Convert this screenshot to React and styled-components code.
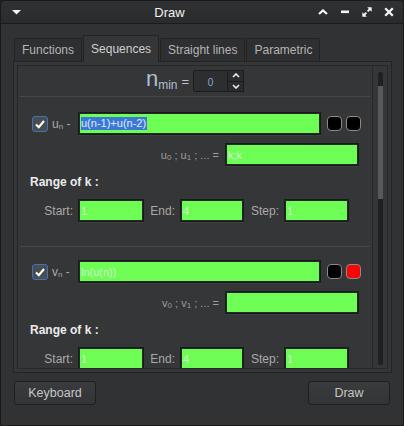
import React from 'react'
import styled, { createGlobalStyle } from 'styled-components'

const GlobalStyle = createGlobalStyle`
  html, body {
    margin: 0;
    padding: 0;
    background: #1f1f20;
  }
  body {
    font-family: "Liberation Sans", Arial, sans-serif;
  }
  * {
    box-sizing: border-box;
  }
`

const Window = styled.div`
  width: 404px;
  height: 426px;
  background: #313234;
  border: 1px solid #1a1a1b;
  border-radius: 5px 5px 2px 2px;
  display: flex;
  flex-direction: column;
  overflow: hidden;
`

const TitleBar = styled.div`
  height: 23px;
  flex: none;
  display: flex;
  align-items: center;
  background: linear-gradient(#303133, #2a2b2d);
  border-bottom: 1px solid #1b1b1c;
`

const TitleLeft = styled.div`
  width: 30px;
  display: flex;
  align-items: center;
  padding-left: 11px;
`

const Title = styled.div`
  flex: 1;
  text-align: center;
  color: #f2f2f2;
  font-size: 13px;
`

const TitleRight = styled.div`
  width: 95px;
  display: flex;
  align-items: center;
  padding: 0 3px 0 4px;
`

const TitleBtn = styled.div`
  width: 22px;
  height: 22px;
  display: flex;
  align-items: center;
  justify-content: center;
`

const Body = styled.div`
  flex: 1;
  display: flex;
  flex-direction: column;
  padding: 11px 11px 0 12px;
`

const TabBar = styled.div`
  height: 26px;
  display: flex;
  align-items: flex-end;
  padding-left: 1px;
  gap: 1px;
`

const Tab = styled.div`
  position: relative;
  height: ${p => (p.$active ? '27px' : '23px')};
  margin-bottom: ${p => (p.$active ? '-1px' : '0')};
  z-index: ${p => (p.$active ? 1 : 0)};
  padding: 0 7px;
  display: flex;
  align-items: center;
  font-size: 12px;
  color: ${p => (p.$active ? '#cfcfcf' : '#b4b4b4')};
  background: ${p => (p.$active ? '#353638' : '#2e2f31')};
  border: 1px solid #232325;
  border-bottom: ${p => (p.$active ? '1px solid #353638' : 'none')};
  border-radius: 2px 2px 0 0;
`

const Panel = styled.div`
  height: 312px;
  background: #353638;
  border: 1px solid #232325;
  padding: 3px;
  display: flex;
`

const Frame = styled.div`
  flex: 1;
  display: flex;
  border: 1px solid #27282a;
  min-height: 0;
`

const Content = styled.div`
  flex: 1;
  overflow: hidden;
  display: flex;
  flex-direction: column;
`

const ScrollBar = styled.div`
  width: 15px;
  border-left: 1px solid #27282a;
  display: flex;
  justify-content: center;
  padding: 6px 0 3px;
`

const Groove = styled.div`
  width: 5px;
  display: flex;
  flex-direction: column;
  background: #1f2022;
  border-radius: 3px;
  overflow: hidden;
`

const Thumb = styled.div`
  margin-top: 14px;
  height: 113px;
  background: #58595b;
`

const NminRow = styled.div`
  height: 30px;
  flex: none;
  display: flex;
  align-items: center;
  justify-content: center;
`

const BigN = styled.span`
  font-size: 22px;
  line-height: 22px;
  color: #aebfd0;
  margin-top: -4px;
`

const MinSub = styled.span`
  font-size: 12px;
  color: #aebfd0;
  margin-top: 8px;
`

const Equals = styled.span`
  font-size: 13px;
  color: #c4c4c4;
  margin: 0 4px 0 4px;
`

const SpinBox = styled.div`
  display: flex;
  height: 22px;
`

const SpinText = styled.div`
  width: 35px;
  background: #2d2e30;
  border: 1px solid #1c1c1d;
  border-radius: 2px 0 0 2px;
  display: flex;
  align-items: center;
  justify-content: center;
  font-size: 10px;
  color: #8aa6d6;
  padding-top: 2px;
`

const SpinArrows = styled.div`
  width: 16px;
  display: flex;
  flex-direction: column;
  background: #2b2c2e;
  border: 1px solid #1c1c1d;
  border-left: none;
`

const SpinArrow = styled.div`
  flex: 1;
  display: flex;
  align-items: center;
  justify-content: center;
  border-top: ${p => (p.$lower ? '1px solid #1c1c1d' : 'none')};
`

const Separator = styled.div`
  height: 1px;
  flex: none;
  background: #47484a;
  margin: 0 2px;
`

const Section = styled.div`
  flex: none;
  padding: ${p => p.$top}px 0 24px;
  display: flex;
  flex-direction: column;
`

const SeqRow = styled.div`
  height: 23px;
  display: flex;
  align-items: center;
  padding: 0 11px 0 14px;
`

const CheckBox = styled.div`
  width: 16px;
  height: 16px;
  flex: none;
  border: 1px solid #3f73b8;
  border-radius: 3px;
  background: #4b4c4e;
  display: flex;
  align-items: center;
  justify-content: center;
`

const SeqLabel = styled.div`
  width: 26px;
  margin-left: 4px;
  font-size: 12px;
  color: #a9a9a9;
  white-space: nowrap;
`

const Sub = styled.sub`
  font-size: 8px;
  vertical-align: baseline;
  position: relative;
  top: 1px;
`

const Field = styled.div`
  flex: ${p => (p.$width ? 'none' : '1')};
  width: ${p => (p.$width ? `${p.$width}px` : 'auto')};
  height: 23px;
  border: 1px solid #1a1a1b;
  background: #272829;
  padding: 1px;
  display: flex;
  box-shadow: 0 1px 0 #3e3f41;
`

const Fill = styled.div`
  flex: 1;
  background: #6dff55;
  display: flex;
  align-items: center;
  padding-left: 1px;
  font-size: 11px;
  color: #d6f3cf;
  white-space: nowrap;
  overflow: hidden;
`

const Selected = styled.span`
  background: #3a78d8;
  color: #e2eafa;
  line-height: 13px;
  padding-right: 1px;
`

const Swatch = styled.div`
  width: 15px;
  height: 15px;
  flex: none;
  margin-left: ${p => p.$gap}px;
  background: ${p => p.$color};
  border: 1px solid #8a8a8a;
  border-radius: 4px;
`

const InitRow = styled.div`
  height: 23px;
  margin-top: 8px;
  display: flex;
  align-items: center;
  justify-content: flex-end;
  padding-right: 13px;
`

const InitLabel = styled.div`
  font-size: 11px;
  color: #9c9c9c;
  margin-right: 6px;
  white-space: nowrap;
`

const Heading = styled.div`
  margin-top: 6px;
  padding-left: 12px;
  line-height: 20px;
  font-size: 12px;
  font-weight: bold;
  color: #ececec;
`

const RangeRow = styled.div`
  height: 23px;
  margin-top: 7px;
  display: flex;
  align-items: center;
`

const RangeLabel = styled.div`
  width: ${p => p.$width}px;
  text-align: right;
  padding-right: 5px;
  font-size: 12px;
  color: #a9a9a9;
`

const Footer = styled.div`
  display: flex;
  justify-content: space-between;
  padding: 8px 2px 0 1px;
`

const Button = styled.div`
  width: 82px;
  height: 24px;
  border: 1px solid #1e1f20;
  border-radius: 3px;
  background: linear-gradient(#3a3b3d, #333436);
  display: flex;
  align-items: center;
  justify-content: center;
  font-size: 12.5px;
  color: #c6c6c6;
`

const Check = () => (
  <svg width="12" height="12" viewBox="0 0 12 12">
    <path d="M2 6.5 L4.8 9.2 L10 3" fill="none" stroke="#fff" strokeWidth="2.2" />
  </svg>
)

const Chevron = ({ down }) => (
  <svg width="8" height="5" viewBox="0 0 8 5">
    <path d={down ? 'M1 1 L4 4 L7 1' : 'M1 4 L4 1 L7 4'} fill="none" stroke="#f0f0f0" strokeWidth="1.6" />
  </svg>
)

const TitleIcon = ({ kind }) => {
  if (kind === 'up') {
    return (
      <svg width="10" height="6" viewBox="0 0 10 6">
        <path d="M1 5 L5 1.4 L9 5" fill="none" stroke="#f4f4f4" strokeWidth="2.2" />
      </svg>
    )
  }
  if (kind === 'min') {
    return (
      <svg width="10" height="4" viewBox="0 0 10 4">
        <rect x="1" y="0.5" width="8" height="2.6" fill="#f4f4f4" />
      </svg>
    )
  }
  if (kind === 'max') {
    return (
      <svg width="10" height="10" viewBox="0 0 10 10">
        <polygon points="5.2,0.3 9.7,0.3 9.7,4.8" fill="#f4f4f4" />
        <line x1="8" y1="2" x2="5.6" y2="4.4" stroke="#f4f4f4" strokeWidth="1.8" />
        <polygon points="0.3,5.2 0.3,9.7 4.8,9.7" fill="#f4f4f4" />
        <line x1="2" y1="8" x2="4.4" y2="5.6" stroke="#f4f4f4" strokeWidth="1.8" />
      </svg>
    )
  }
  return (
    <svg width="10" height="10" viewBox="0 0 10 10">
      <path d="M1.2 1.2 L8.8 8.8 M8.8 1.2 L1.2 8.8" stroke="#f4f4f4" strokeWidth="2.3" />
    </svg>
  )
}

const SequenceBlock = ({ name, formula, selected, init, color, top }) => (
  <Section $top={top}>
    <SeqRow>
      <CheckBox><Check /></CheckBox>
      <SeqLabel>{name}<Sub>n</Sub> -</SeqLabel>
      <Field>
        <Fill>{selected ? <Selected>{formula}</Selected> : formula}</Fill>
      </Field>
      <Swatch $color="#000" $gap={6} />
      <Swatch $color={color} $gap={4} />
    </SeqRow>
    <InitRow>
      <InitLabel>{name}<Sub>0</Sub> ; {name}<Sub>1</Sub> ; ... =</InitLabel>
      <Field $width={134}>
        <Fill>{init}</Fill>
      </Field>
    </InitRow>
    <Heading>Range of k :</Heading>
    <RangeRow>
      <RangeLabel $width={60}>Start:</RangeLabel>
      <Field $width={66}><Fill>1</Fill></Field>
      <RangeLabel $width={36}>End:</RangeLabel>
      <Field $width={64}><Fill>4</Fill></Field>
      <RangeLabel $width={40}>Step:</RangeLabel>
      <Field $width={65}><Fill>1</Fill></Field>
    </RangeRow>
  </Section>
)

const tabs = ['Functions', 'Sequences', 'Straight lines', 'Parametric']

export default function App() {
  return (
    <>
      <GlobalStyle />
      <Window>
        <TitleBar>
          <TitleLeft>
            <svg width="9" height="5" viewBox="0 0 9 5">
              <polygon points="0,0 9,0 4.5,4.5" fill="#f4f4f4" />
            </svg>
          </TitleLeft>
          <Title>Draw</Title>
          <TitleRight>
            {['up', 'min', 'max', 'close'].map(k => (
              <TitleBtn key={k}><TitleIcon kind={k} /></TitleBtn>
            ))}
          </TitleRight>
        </TitleBar>
        <Body>
          <TabBar>
            {tabs.map(t => (
              <Tab key={t} $active={t === 'Sequences'}>{t}</Tab>
            ))}
          </TabBar>
          <Panel>
            <Frame>
              <Content>
                <NminRow>
                  <BigN>n</BigN>
                  <MinSub>min</MinSub>
                  <Equals>=</Equals>
                  <SpinBox>
                    <SpinText>0</SpinText>
                    <SpinArrows>
                      <SpinArrow><Chevron /></SpinArrow>
                      <SpinArrow $lower><Chevron down /></SpinArrow>
                    </SpinArrows>
                  </SpinBox>
                </NminRow>
                <Separator />
                <SequenceBlock name="u" formula="u(n-1)+u(n-2)" selected init="k;k" color="#000" top={15} />
                <Separator />
                <SequenceBlock name="v" formula="ln(u(n))" init="" color="#ff0000" top={13} />
              </Content>
              <ScrollBar>
                <Groove>
                  <Thumb />
                </Groove>
              </ScrollBar>
            </Frame>
          </Panel>
          <Footer>
            <Button>Keyboard</Button>
            <Button>Draw</Button>
          </Footer>
        </Body>
      </Window>
    </>
  )
}
